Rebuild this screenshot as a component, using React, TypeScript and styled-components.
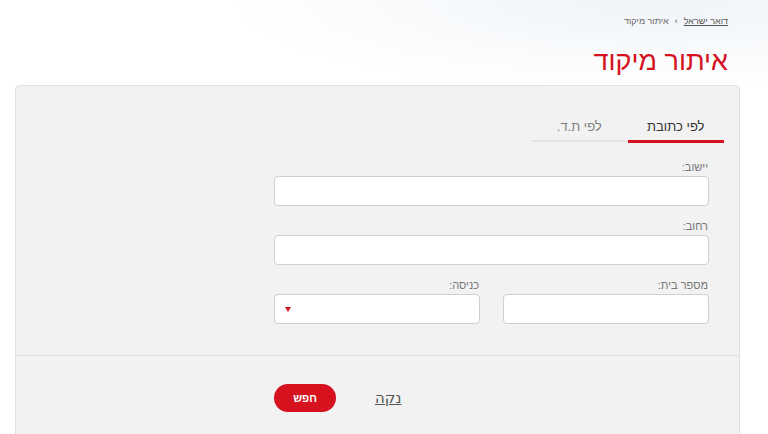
import React, {FC} from "react";
import styled, {createGlobalStyle} from "styled-components";

const RED = '#d5121e';

const GlobalStyle = createGlobalStyle`
  html, body {
    margin: 0;
    padding: 0;
  }
  body {
    font-family: "Liberation Sans", Arial, sans-serif;
    background: #fff;
    color: #333;
  }
`;

const Page = styled.div`
  direction: rtl;
  height: 434px;
  padding: 0 28px 0 15px;
  background:
    radial-gradient(ellipse 420px 90px at 85% 0%, rgba(226, 234, 242, 0.55), rgba(255, 255, 255, 0) 100%),
    #fff;
  overflow: hidden;
`;

const Header = styled.header`
  padding: 14px 12px 0 0;
  height: 85px;
  box-sizing: border-box;
`;

const Breadcrumbs = styled.nav`
  display: flex;
  align-items: center;
  gap: 6px;
  font-size: 9px;
  color: #666;
  height: 14px;
`;

const Crumb = styled.a`
  color: #555;
  text-decoration: underline;
`;

const Sep = styled.span`
  font-size: 9px;
  color: #555;
`;

const Title = styled.h1`
  margin: 16px 0 0;
  font-size: 27px;
  font-weight: 400;
  line-height: 34px;
  color: ${RED};
`;

const Panel = styled.section`
  background: #f2f2f2;
  border: 1px solid #e2e2e2;
  border-radius: 4px;
  min-height: 400px;
`;

const FormArea = styled.div`
  padding: 26px 15px 31px 0;
`;

const Tabs = styled.div`
  display: flex;
  width: 193px;
`;

const Tab = styled.div<{active?: boolean}>`
  flex: 1;
  text-align: center;
  font-size: 13px;
  line-height: 18px;
  padding: 6px 0 4px;
  color: ${p => (p.active ? '#333' : '#808080')};
  border-bottom: ${p => (p.active ? `3px solid ${RED}` : '2px solid #e4e4e4')};
  margin-bottom: ${p => (p.active ? '0' : '1px')};
`;

const Fields = styled.div`
  width: 435px;
  margin: 17px 15px 0 0;
  display: flex;
  flex-direction: column;
  gap: 13px;
`;

const Row = styled.div`
  display: flex;
  gap: 23px;
`;

const Field = styled.label`
  flex: 1;
  display: flex;
  flex-direction: column;
`;

const Label = styled.span`
  font-size: 11px;
  line-height: 14px;
  color: #777;
  margin-bottom: 2px;
  padding-right: 1px;
`;

const Input = styled.input`
  box-sizing: border-box;
  height: 30px;
  width: 100%;
  border: 1px solid #cfcfcf;
  border-radius: 4px;
  background: #fff;
  font: inherit;
  padding: 0 8px;
  outline: none;
`;

const SelectBox = styled.div`
  position: relative;
  box-sizing: border-box;
  height: 30px;
  border: 1px solid #cfcfcf;
  border-radius: 4px;
  background: #fff;
`;

const Arrow = styled.span`
  position: absolute;
  left: 10px;
  top: 12px;
  width: 0;
  height: 0;
  border-left: 3.5px solid transparent;
  border-right: 3.5px solid transparent;
  border-top: 5px solid ${RED};
`;

const Divider = styled.hr`
  margin: 0;
  border: none;
  border-top: 1px solid #dcdcdc;
`;

const Actions = styled.div`
  display: flex;
  align-items: center;
  width: 435px;
  margin-right: 30px;
  padding-top: 28px;
  gap: 39px;
  justify-content: flex-end;
`;

const ClearLink = styled.a`
  font-size: 15px;
  line-height: 20px;
  color: #555;
  text-decoration: underline;
  font-family: "DejaVu Sans", sans-serif;
`;

const SearchButton = styled.button`
  width: 62px;
  height: 28px;
  border: none;
  border-radius: 14px;
  background: ${RED};
  color: #fff;
  font-family: inherit;
  font-size: 11px;
  font-weight: 700;
  cursor: pointer;
`;

const App: FC = () => (
  <>
    <GlobalStyle/>
    <Page>
      <Header>
        <Breadcrumbs>
          <Crumb>דואר ישראל</Crumb>
          <Sep>›</Sep>
          <span>איתור מיקוד</span>
        </Breadcrumbs>
        <Title>איתור מיקוד</Title>
      </Header>
      <Panel>
        <FormArea>
          <Tabs>
            <Tab active>לפי כתובת</Tab>
            <Tab>לפי ת.ד.</Tab>
          </Tabs>
          <Fields>
            <Field>
              <Label>יישוב:</Label>
              <Input/>
            </Field>
            <Field>
              <Label>רחוב:</Label>
              <Input/>
            </Field>
            <Row>
              <Field>
                <Label>מספר בית:</Label>
                <Input/>
              </Field>
              <Field>
                <Label>כניסה:</Label>
                <SelectBox><Arrow/></SelectBox>
              </Field>
            </Row>
          </Fields>
        </FormArea>
        <Divider/>
        <Actions>
          <ClearLink>נקה</ClearLink>
          <SearchButton>חפש</SearchButton>
        </Actions>
      </Panel>
    </Page>
  </>
);

export default App;
